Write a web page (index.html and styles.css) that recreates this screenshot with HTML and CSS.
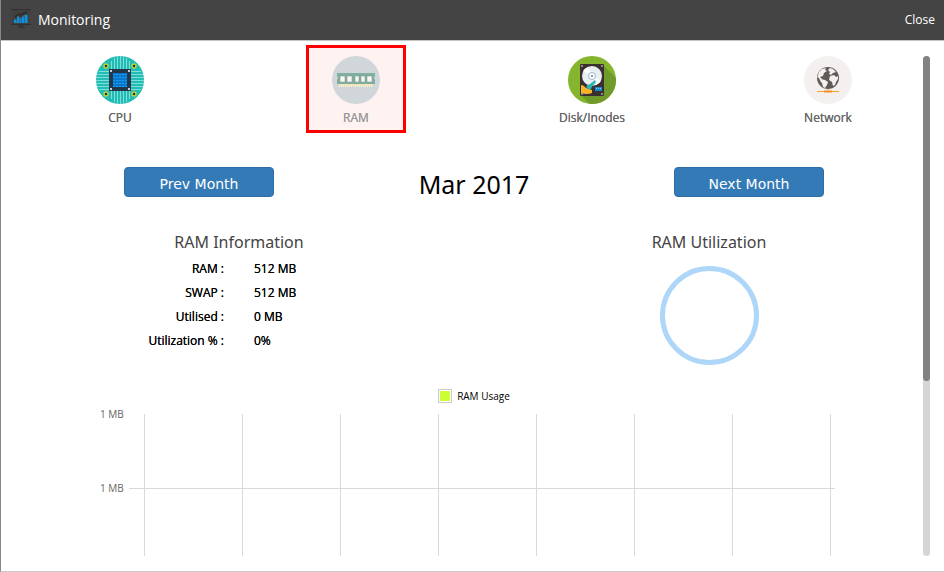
FILE: index.html
```html
<!DOCTYPE html>
<html lang="en">
<head>
    <meta charset="UTF-8">
    <meta name="viewport" content="width=device-width, initial-scale=1.0">
    <title>Monitoring</title>
    <link rel="stylesheet" href="styles.css">
</head>
<body>
    <div class="window">
        <header class="titlebar">
            <svg class="titlebar-icon" viewBox="0 0 20 20" aria-hidden="true">
                <rect x="1" y="1" width="18" height="15" fill="#404040"/>
                <path d="M0 .5h20M0 15.500h20" stroke="#303030"/>
                <path d="M4 8l4-3 2 1 3-2 3-1" fill="none" stroke="#2b2b2b" stroke-width="1.500"/>
                <path d="M3 10.500h2.500V14H3zM6 7.500h2V14H6zM8.500 9h2v5h-2zM11 7.500h2V14h-2zM13.500 6h3v8h-3z" fill="#0d8fdc"/>
                <path d="M8 16h4l2 3H6z" fill="#363636"/>
            </svg>
            <h1>Monitoring</h1>
            <button type="button" class="close">Close</button>
        </header>

        <main class="content">
            <nav class="tabs">
                <a href="#cpu" class="tab">
                    <svg viewBox="0 0 48 48" aria-hidden="true">
                        <circle cx="24" cy="24" r="24" fill="#1fbdb5"/>
                        <path d="M15.500 5v9M18.500 2v12M21.500 0v14M24.500 0v14M27.500 0v14M30.500 2v12M33.500 5v9M15.500 34v9M18.500 34v12M21.500 34v14M24.500 34v14M27.500 34v14M30.500 34v12M33.500 34v9M3 15.500h11M1 18.500h13M0 21.500h14M0 24.500h14M0 27.500h14M1 30.500h13M3 33.500h11M34 15.500h11M34 18.500h13M34 21.500h14M34 24.500h14M34 27.500h14M34 30.500h13M34 33.500h11" stroke="#84dcd7"/>
                        <rect x="13" y="13" width="22" height="22" fill="#24384d"/>
                        <rect x="17" y="17" width="14" height="14" fill="#0879d0"/>
                        <path d="M17 18.500h14M17 21.500h14M17 24.500h14M17 27.500h14M17 30.500h14" stroke="#1b9cf0" stroke-dasharray="2 1"/>
                        <g fill="#fff"><circle cx="15" cy="15" r="1"/><circle cx="33" cy="15" r="1"/><circle cx="15" cy="33" r="1"/><circle cx="33" cy="33" r="1"/></g>
                        <g fill="#24384d" stroke="#b9d531" stroke-width="1.500"><circle cx="10" cy="10" r="2"/><circle cx="38" cy="10" r="2"/><circle cx="10" cy="38" r="2"/><circle cx="38" cy="38" r="2"/></g>
                    </svg>
                    <span>CPU</span>
                </a>
                <a href="#ram" class="tab active" aria-current="page">
                    <svg viewBox="0 0 48 48" aria-hidden="true">
                        <circle cx="24" cy="24" r="24" fill="#d1d6da"/>
                        <path d="M5 17h43v0H43v3l-1 2 1 2v4H5v-4l1-2-1-2z" fill="#80ae9f"/>
                        <path d="M8 20h5v6H8zM15 20h5v6h-5zM23 20h4v6h-4zM29 20h4v6h-4zM35 20h5v6h-5z" fill="#fdf3f2" stroke="#6d9c8d" stroke-width=".5"/>
                        <path d="M7 29h34" stroke="#efe2bb" stroke-width="2"/>
                        <path d="M7 30h34" stroke="#fbefce" stroke-width="2" stroke-dasharray="1 1"/>
                    </svg>
                    <span>RAM</span>
                </a>
                <a href="#disk" class="tab">
                    <svg viewBox="0 0 48 48" aria-hidden="true">
                        <clipPath id="disk-round"><circle cx="24" cy="24" r="24"/></clipPath>
                        <circle cx="24" cy="24" r="24" fill="#84b52d"/>
                        <path d="M35 9l16 16v26H24L13 39z" fill="#709b2a" clip-path="url(#disk-round)"/>
                        <rect x="12" y="8" width="24" height="32" rx="1" fill="#3a302f"/>
                        <circle cx="24" cy="20" r="10" fill="#e8eff3"/>
                        <path d="M24 20l-9-5a10 10 0 0 1 5-4zM24 20l9 5a10 10 0 0 1-5 4z" fill="#fff"/>
                        <circle cx="24" cy="20" r="3.500" fill="#fff" stroke="#9fb8cc"/>
                        <circle cx="24" cy="20" r="1" fill="#577ca0"/>
                        <path d="M13 29q3 0 5 3l6 2v3q-5 2-11 0z" fill="#fbb32c"/>
                        <path d="M27 24l1 2-6 7-3-2 3-3z" fill="#29b7b1"/>
                        <circle cx="21" cy="31" r="2.500" fill="#29b7b1"/>
                        <rect x="27" y="31" width="7" height="4" fill="#1789cb"/>
                        <path d="M28 32.500h5" stroke="#8ed0ef" stroke-dasharray="1 1"/>
                        <g fill="#aaa"><circle cx="14" cy="10" r="1"/><circle cx="34" cy="10" r="1"/><circle cx="14" cy="38" r="1"/><circle cx="34" cy="38" r="1"/></g>
                    </svg>
                    <span>Disk/Inodes</span>
                </a>
                <a href="#network" class="tab">
                    <svg viewBox="0 0 48 48" aria-hidden="true">
                        <circle cx="24" cy="24" r="24" fill="#f4f0f0"/>
                        <circle cx="24" cy="22" r="11" fill="#625a54"/>
                        <path d="M15 16l3-3 4-1-1 2 2 1-3 2-1 3-3 1 2 2-2 1-2-3-1 1zM17 23l4 1 3 2-1 3-2 3-2-1-1-4-2-2zM26 12l3 1 3 3-3 1-2 2-2-1 1-2-2-2zM26 20l4-1 2 2 2-1v3l-2 3-1 3-2 1-1-4-3-2z" fill="#f4f0f0"/>
                        <path d="M24 33v2M13 35.500h22" stroke="#f3a13b"/>
                        <path d="M20 34.500h8v2h-8z" fill="#f59120"/>
                    </svg>
                    <span>Network</span>
                </a>
            </nav>

            <div class="month-bar">
                <button type="button" class="btn">Prev Month</button>
                <h2>Mar 2017</h2>
                <button type="button" class="btn">Next Month</button>
            </div>

            <div class="summary">
                <section>
                    <h3>RAM Information</h3>
                    <table class="info">
                        <tbody>
                            <tr><th scope="row">RAM :</th><td>512 MB</td></tr>
                            <tr><th scope="row">SWAP :</th><td>512 MB</td></tr>
                            <tr><th scope="row">Utilised :</th><td>0 MB</td></tr>
                            <tr><th scope="row">Utilization % :</th><td>0%</td></tr>
                        </tbody>
                    </table>
                </section>
                <section>
                    <h3>RAM Utilization</h3>
                    <div class="ring"></div>
                </section>
            </div>

            <div class="chart">
                <div class="legend"><span class="swatch"></span>RAM Usage</div>
                <div class="chart-row top">
                    <span class="tick">1 MB</span>
                    <div class="cells"><i></i><i></i><i></i><i></i><i></i><i></i><i></i></div>
                </div>
                <div class="chart-row">
                    <span class="tick">1 MB</span>
                    <div class="cells"><i></i><i></i><i></i><i></i><i></i><i></i><i></i></div>
                </div>
            </div>

            <div class="scrollbar"><div class="thumb"></div></div>
        </main>
    </div>
</body>
</html>
```
FILE: styles.css
```css
* {
    box-sizing: border-box;
}

body {
    margin: 0;
    background-color: #fff;
    color: #000;
    font-family: "Open Sans", "Noto Sans", sans-serif;
    font-size: 12px;
}

h1, h2, h3 {
    margin: 0;
    font-weight: 400;
}

button {
    font-family: inherit;
    cursor: pointer;
}

.window {
    display: flex;
    flex-direction: column;
    height: 100vh;
    border-left: 1px solid #888;
    border-bottom: 1px solid #ccc;
}

.titlebar {
    display: flex;
    align-items: center;
    height: 41px;
    padding: 0 9px 2px 10px;
    background-color: #444;
    border-bottom: 1px solid #c4c4c4;
    color: #fff;
}

.titlebar-icon {
    width: 20px;
    height: 20px;
    margin-right: 7px;
}

.titlebar h1 {
    flex: 1;
    font-size: 14px;
}

.close {
    padding: 0;
    border: none;
    background: none;
    color: #fff;
    font-size: 12px;
}

.content {
    position: relative;
    flex: 1;
    overflow: hidden;
    padding: 4px 0 15px 1px;
}

.tabs {
    display: flex;
    justify-content: space-between;
    padding: 0 66px 0 68px;
}

.tab {
    display: flex;
    flex-direction: column;
    align-items: center;
    width: 100px;
    height: 88px;
    padding-top: 8px;
    border: 3px solid transparent;
    color: #666;
    text-decoration: none;
    text-shadow: 0 0 0 #666;
}

.tab svg {
    width: 48px;
    height: 48px;
}

.tab span {
    margin-top: 5px;
    line-height: 18px;
}

.tab.active {
    border-color: #f00;
    background-color: #fff3f2;
    color: #999;
    text-shadow: 0 0 0 #999;
}

.month-bar {
    display: flex;
    justify-content: space-between;
    align-items: center;
    height: 36px;
    margin-top: 31px;
    padding: 0 120px 0 122px;
}

.month-bar h2 {
    padding-top: 4px;
    font-family: "Noto Sans", sans-serif;
    font-size: 25px;
}

.btn {
    width: 150px;
    height: 30px;
    padding: 4px 0 0;
    border: 1px solid #2e6da4;
    border-radius: 4px;
    background-color: #337ab7;
    color: #fff;
    font-family: "DejaVu Sans", sans-serif;
    font-size: 14px;
}

.summary {
    display: grid;
    grid-template-columns: 1fr 1fr;
    margin-top: 30px;
    padding-left: 2px;
}

.summary h3 {
    color: #444;
    font-family: "Noto Sans", sans-serif;
    font-size: 16px;
    line-height: 24px;
    text-align: center;
}

.info {
    width: 100%;
    margin-top: 2px;
    border-collapse: collapse;
    table-layout: fixed;
}

.info th,
.info td {
    height: 24px;
    padding: 0 15px;
    font-weight: 400;
    text-align: left;
    text-shadow: 0 0 0 #000;
}

.info th {
    text-align: right;
}

.ring {
    width: 99px;
    height: 99px;
    margin: 12px auto 0;
    border: 5px solid #aed6f8;
    border-radius: 50%;
}

.chart {
    margin-top: 22px;
    padding: 0 109px 0 98px;
    font-size: 10px;
}

.legend {
    display: flex;
    justify-content: center;
    align-items: center;
    gap: 5px;
    height: 18px;
    margin-bottom: 9px;
    padding-left: 13px;
}

.swatch {
    width: 14px;
    height: 14px;
    border: 1px solid #ccc;
    background-color: #cbff33;
    box-shadow: inset 0 0 0 1px #fff;
}

.chart-row {
    display: flex;
    height: 68px;
}

.chart-row.top {
    height: 74px;
}

.tick {
    width: 29px;
    height: 14px;
    margin-top: -7px;
    color: #666;
    line-height: 14px;
}

.cells {
    display: flex;
    flex: 1;
    padding: 0 4px 0 15px;
    border-top: 1px solid #d9d9d9;
}

.top .cells {
    border-top: none;
}

.cells i {
    flex: 1;
    border-left: 1px solid #d9d9d9;
}

.cells i:last-child {
    border-right: 1px solid #d9d9d9;
}

.scrollbar {
    position: absolute;
    top: 15px;
    right: 14px;
    bottom: 15px;
    width: 7px;
    border-radius: 4px;
    background-color: #d6d6d6;
}

.thumb {
    height: 65%;
    border-radius: 4px;
    background-color: #828282;
}
```
